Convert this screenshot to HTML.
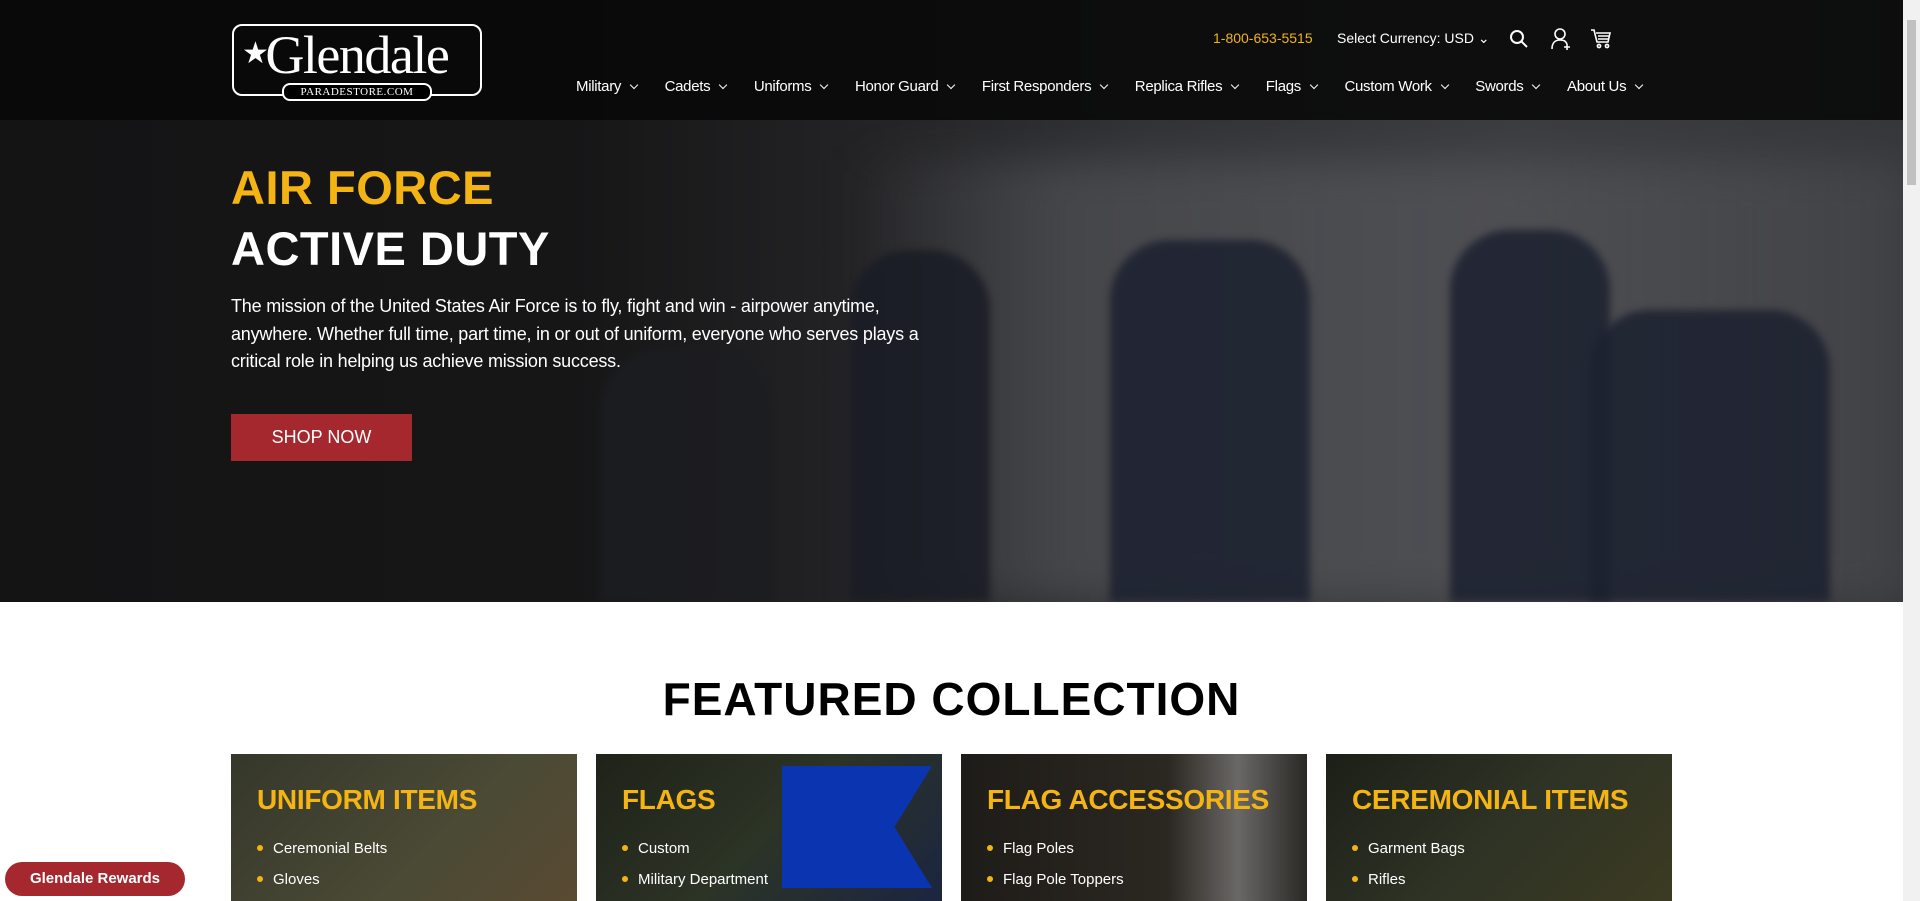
<!DOCTYPE html>
<html><head><meta charset="utf-8">
<style>
*{margin:0;padding:0;box-sizing:border-box}
html,body{width:1920px;height:901px;overflow:hidden;background:#fff;font-family:"Liberation Sans",sans-serif}
.sb{position:absolute;right:0;top:0;width:17px;height:901px;background:#f1f1f1}
.sb i{position:absolute;left:4px;top:20px;width:9px;height:165px;background:#c1c1c1}
.hero{position:absolute;left:0;top:0;width:1903px;height:602px;overflow:hidden;
background:linear-gradient(90deg,#141415 0%,#161617 30%,#232325 45%,#323336 60%,#3c3d40 80%,#36373a 100%)}
.hero .deck{position:absolute;left:850px;top:160px;width:1060px;height:442px;background:linear-gradient(90deg,rgba(75,76,80,0),rgba(75,76,80,.8) 20%,rgba(80,81,85,.9) 60%,rgba(70,71,75,.7));filter:blur(20px)}
.fig{position:absolute;background:#1c2130;border-radius:60px 60px 0 0;filter:blur(4px);opacity:.85}
.hdr{position:absolute;left:0;top:0;width:1903px;height:120px;background:rgba(8,8,8,.88)}
.logo{position:absolute;left:232px;top:24px;width:250px;height:72px;border:2px solid #fff;border-radius:10px}
.logo b{position:absolute;left:8px;top:-2px;font-family:"Liberation Serif",serif;font-weight:normal;font-size:54px;color:#fff;letter-spacing:-1.5px;white-space:nowrap}
.logo b em{font-style:normal;font-size:30px;position:relative;top:-10px;margin-right:-2px}
.logo s{position:absolute;left:48px;top:57px;width:150px;height:18px;background:#000;border:2px solid #fff;border-radius:8px;text-decoration:none;color:#fff;font-family:"Liberation Serif",serif;font-size:11px;text-align:center;line-height:14px;letter-spacing:.5px}
.top{position:absolute;top:30px;font-size:14px;color:#fff}
.nav{position:absolute;top:78px;left:576px;display:flex;font-size:15px;color:#fff;letter-spacing:-.3px}
.nav span{margin-right:27.5px}
.nav span:after{content:"";display:inline-block;width:5px;height:5px;border-right:1.3px solid #fff;border-bottom:1.3px solid #fff;transform:rotate(45deg);margin-left:10px;position:relative;top:-3px}
h1{position:absolute;left:231px;font-weight:bold;font-size:47px;letter-spacing:.5px}
.p{position:absolute;left:231px;top:293px;width:730px;font-size:18px;line-height:27.5px;color:#fff;letter-spacing:-.2px}
.btn{position:absolute;left:231px;top:414px;width:181px;height:47px;background:#a4282e;color:#fff;font-size:18px;text-align:center;line-height:47px}
.fc{position:absolute;left:0;width:1903px;top:672px;text-align:center;font-weight:bold;font-size:46px;letter-spacing:1px;color:#000}
.card{position:absolute;top:754px;width:346px;height:147px;overflow:hidden}
.card h3{position:absolute;left:26px;top:30px;color:#f4b514;font-size:28px;font-weight:bold;letter-spacing:-.3px;white-space:nowrap}
.card ul{position:absolute;left:26px;top:79px;list-style:none;color:#fff;font-size:15px;line-height:31px}
.card li:before{content:"";display:inline-block;width:6px;height:6px;border-radius:3px;background:#f4b514;margin-right:10px;position:relative;top:-2px}
.rw{position:absolute;left:5px;top:862px;width:180px;height:34px;border-radius:17px;background:#a4282e;color:#fff;font-weight:bold;font-size:15px;text-align:center;line-height:34px}
</style></head><body>
<div class="hero">
<div class="deck"></div>
<div class="fig" style="left:1110px;top:240px;width:200px;height:362px"></div>
<div class="fig" style="left:1450px;top:230px;width:160px;height:372px"></div>
<div class="fig" style="left:1590px;top:310px;width:240px;height:292px"></div>
<div class="fig" style="left:850px;top:250px;width:140px;height:352px;background:#191c25"></div>
<div class="fig" style="left:600px;top:350px;width:170px;height:252px;background:#1c1d21"></div>
</div>
<div class="hdr"></div>
<div class="logo"><b><em>&#9733;</em>Glendale</b><s>PARADESTORE.COM</s></div>
<div class="top" style="left:1213px;color:#f0b41a">1-800-653-5515</div>
<div class="top" style="left:1337px">Select Currency: USD &#8964;</div>
<svg style="position:absolute;left:1509px;top:29px" width="20" height="20" viewBox="0 0 20 20" fill="none" stroke="#fff" stroke-width="2"><circle cx="8" cy="8" r="6"/><path d="M12.5 12.5L18 18"/></svg>
<svg style="position:absolute;left:1550px;top:27px" width="22" height="24" viewBox="0 0 22 24" fill="none" stroke="#fff" stroke-width="1.6"><circle cx="10" cy="7" r="5"/><path d="M2 22c0-6 3-9 8-9s6 2 7 4M17 17v6M14 20h6"/></svg>
<svg style="position:absolute;left:1590px;top:28px" width="22" height="22" viewBox="0 0 22 22" fill="none" stroke="#fff" stroke-width="1.6"><path d="M1 2h3l3 12h11l2-9H6M8 8h11M8 11h10"/><circle cx="9" cy="18" r="1.6"/><circle cx="17" cy="18" r="1.6"/></svg>
<div class="nav"><span>Military</span><span>Cadets</span><span>Uniforms</span><span>Honor Guard</span><span>First Responders</span><span>Replica Rifles</span><span>Flags</span><span>Custom Work</span><span>Swords</span><span>About Us</span></div>
<h1 style="top:160px;color:#f4b514">AIR FORCE</h1>
<h1 style="top:221px;color:#fff">ACTIVE DUTY</h1>
<div class="p">The mission of the United States Air Force is to fly, fight and win - airpower anytime, anywhere. Whether full time, part time, in or out of uniform, everyone who serves plays a critical role in helping us achieve mission success.</div>
<div class="btn">SHOP NOW</div>
<div class="fc">FEATURED COLLECTION</div>
<div class="card" style="left:231px;background:linear-gradient(135deg,#35372a,#4a4a35 60%,#5a4a32)"><h3>UNIFORM ITEMS</h3><ul><li>Ceremonial Belts</li><li>Gloves</li></ul></div>
<div class="card" style="left:596px;background:linear-gradient(135deg,#1f2218,#2c3426 50%,#1b2540)"><div style="position:absolute;left:186px;top:12px;width:150px;height:122px;background:#0a34b0;clip-path:polygon(0 0,100% 0,75% 50%,100% 100%,0 100%)"></div><h3>FLAGS</h3><ul><li>Custom</li><li>Military Department</li></ul></div>
<div class="card" style="left:961px;background:linear-gradient(90deg,#1e1c18,#2b2822 60%,#6a6866 80%,#2a2825)"><h3>FLAG ACCESSORIES</h3><ul><li>Flag Poles</li><li>Flag Pole Toppers</li></ul></div>
<div class="card" style="left:1326px;background:linear-gradient(135deg,#1c1f17,#2e3325 50%,#3c3a22)"><h3>CEREMONIAL ITEMS</h3><ul><li>Garment Bags</li><li>Rifles</li></ul></div>
<div class="rw">Glendale Rewards</div>
<div class="sb"><i></i></div>
</body></html>
